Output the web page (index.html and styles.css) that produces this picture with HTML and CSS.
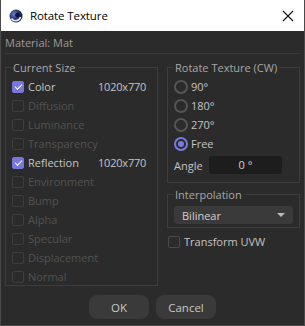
FILE: index.html
```html
<!DOCTYPE html>
<html lang="en">
<head>
  <meta charset="UTF-8">
  <title>Rotate Texture</title>
  <link rel="stylesheet" href="styles.css">
</head>
<body>
  <div class="window">
    <!-- Title bar -->
    <div class="titlebar">
      <svg class="app-icon" width="14" height="14" viewBox="0 0 14 14">
        <defs>
          <radialGradient id="sph" cx="0.35" cy="0.35" r="0.75">
            <stop offset="0" stop-color="#6a7fc8"/>
            <stop offset="0.6" stop-color="#1d2a66"/>
            <stop offset="1" stop-color="#0b1030"/>
          </radialGradient>
        </defs>
        <circle cx="7" cy="7" r="6.5" fill="url(#sph)"/>
        <path d="M2.5 9.5 A5 5 0 0 0 11.5 8" stroke="#e8ecf8" stroke-width="1.6" fill="none"/>
        <circle cx="8.5" cy="6" r="2.3" fill="#0c1238"/>
      </svg>
      <span class="title">Rotate Texture</span>
      <svg class="close" width="12" height="12" viewBox="0 0 12 12">
        <path d="M1 1 L11 11 M11 1 L1 11" stroke="#111" stroke-width="1.1"/>
      </svg>
    </div>

    <div class="content">
      <div class="material">Material: Mat</div>

      <div class="columns">
        <fieldset class="group current-size">
          <legend>Current Size</legend>
          <div class="row"><span class="check on"></span><span class="name">Color</span><span class="size">1020x770</span></div>
          <div class="row off"><span class="check"></span><span class="name">Diffusion</span></div>
          <div class="row off"><span class="check"></span><span class="name">Luminance</span></div>
          <div class="row off"><span class="check"></span><span class="name">Transparency</span></div>
          <div class="row"><span class="check on"></span><span class="name">Reflection</span><span class="size">1020x770</span></div>
          <div class="row off"><span class="check"></span><span class="name">Environment</span></div>
          <div class="row off"><span class="check"></span><span class="name">Bump</span></div>
          <div class="row off"><span class="check"></span><span class="name">Alpha</span></div>
          <div class="row off"><span class="check"></span><span class="name">Specular</span></div>
          <div class="row off"><span class="check"></span><span class="name">Displacement</span></div>
          <div class="row off"><span class="check"></span><span class="name">Normal</span></div>
        </fieldset>

        <div class="right">
          <fieldset class="group rotate">
            <legend>Rotate Texture (CW)</legend>
            <div class="row"><span class="radio"></span><span class="label">90°</span></div>
            <div class="row"><span class="radio"></span><span class="label">180°</span></div>
            <div class="row"><span class="radio"></span><span class="label">270°</span></div>
            <div class="row"><span class="radio on"></span><span class="label">Free</span></div>
            <div class="angle">
              <span class="label">Angle</span>
              <span class="field">0 °</span>
            </div>
          </fieldset>

          <fieldset class="group interp">
            <legend>Interpolation</legend>
            <div class="select">
              <span>Bilinear</span>
              <span class="arrow"></span>
            </div>
          </fieldset>

          <div class="row uvw"><span class="check"></span><span class="label">Transform UVW</span></div>
        </div>
      </div>

      <div class="buttons">
        <button>OK</button>
        <button>Cancel</button>
      </div>
    </div>
  </div>
</body>
</html>
```

FILE: styles.css
```css
body {
  margin: 0;
  padding: 0;
  background-color: #2b2b2b;
  font-family: "Open Sans", "Noto Sans", sans-serif;
  font-size: 11px;
  color: #c4c4c4;
}

.window {
  width: 305px;
  height: 326px;
  box-sizing: border-box;
  border: 1px solid #4a4a4a;
  border-top: none;
  background-color: #2b2b2b;
  overflow: hidden;
}

.titlebar {
  height: 31px;
  display: flex;
  align-items: center;
  background-color: #fff;
  padding-left: 9px;
  padding-right: 11px;
  margin: 0 -1px;
}

.app-icon {
  margin-right: 7px;
}

.title {
  flex: 1;
  color: #000;
  font-size: 11.5px;
  letter-spacing: -0.1px;
}

.content {
  padding: 0 4px;
}

.material {
  height: 22px;
  line-height: 24px;
  color: #9a9a9a;
  border-bottom: 1px solid #3a3a3a;
}

.columns {
  display: flex;
  gap: 9px;
  margin-top: 6px;
}

.group {
  margin: 0;
  border: 1px solid #3d3d3d;
  padding: 0 6px;
}

.group legend {
  padding: 0 2px;
  margin-left: -1px;
  color: #a8a8a8;
}

.current-size {
  width: 153px;
  box-sizing: border-box;
  height: 226px;
  padding-top: 2px;
}

.current-size .name {
  width: 70px;
}

.size {
  letter-spacing: -0.2px;
}

.right {
  width: 133px;
}

.row {
  height: 19px;
  display: flex;
  align-items: center;
}

.row.off {
  color: #525252;
}

.check {
  width: 10px;
  height: 10px;
  border: 1px solid #4a4a4a;
  border-radius: 2px;
  margin-right: 4px;
  position: relative;
}

.row.off .check {
  border-color: #3e3e3e;
}

.check.on {
  background-color: #7676dc;
  border-color: #7676dc;
}

.check.on::after {
  content: "";
  position: absolute;
  left: 2px;
  top: 2px;
  width: 6px;
  height: 3px;
  border-left: 1.6px solid #fff;
  border-bottom: 1.6px solid #fff;
  transform: rotate(-45deg);
}

.rotate {
  height: 123px;
  box-sizing: border-box;
  padding-top: 2px;
}

.radio {
  width: 10px;
  height: 10px;
  border: 2px solid #555;
  border-radius: 50%;
  margin-right: 3px;
  position: relative;
}

.radio.on {
  border-color: #7a7ae0;
}

.radio.on::after {
  content: "";
  position: absolute;
  left: 2px;
  top: 2px;
  width: 6px;
  height: 6px;
  border-radius: 50%;
  background-color: #7a7ae0;
}

.angle {
  display: flex;
  align-items: center;
  margin-top: 3px;
}

.angle .label {
  width: 35px;
}

.field {
  width: 73px;
  height: 18px;
  line-height: 18px;
  background-color: #1d1d1d;
  border-radius: 3px;
  text-align: center;
  color: #d0d0d0;
}

.interp {
  margin-top: 4px;
  box-sizing: border-box;
  padding-top: 4px;
  padding-bottom: 3px;
}

.select {
  height: 18px;
  display: flex;
  align-items: center;
  background-color: #3a3a3a;
  border-radius: 3px;
  padding: 0 8px;
  color: #d0d0d0;
}

.select span:first-child {
  flex: 1;
}

.arrow {
  width: 0;
  height: 0;
  border-left: 4px solid transparent;
  border-right: 4px solid transparent;
  border-top: 4px solid #bbb;
}

.uvw {
  margin-top: 4px;
}

.uvw .check {
  margin-left: 1px;
}

.buttons {
  display: flex;
  justify-content: center;
  gap: 7px;
  margin-top: 9px;
}

.buttons button {
  width: 60px;
  height: 24px;
  background-color: #3a3a3a;
  border: none;
  border-radius: 8px;
  color: #c8c8c8;
  font-family: "Open Sans", "Noto Sans", sans-serif;
  font-size: 11.5px;
  cursor: pointer;
}
```
